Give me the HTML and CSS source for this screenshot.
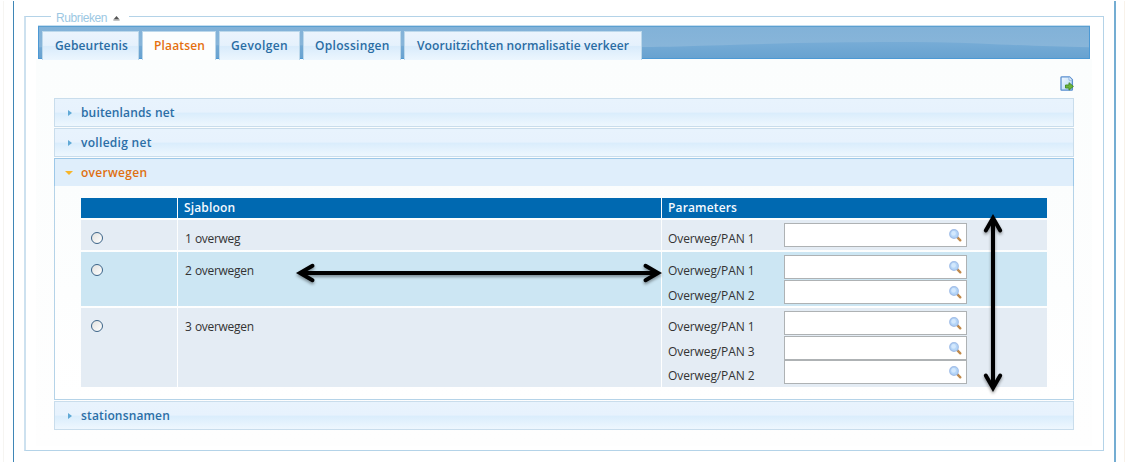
FILE: index.html
```html
<!DOCTYPE html>
<html lang="nl">
<head>
<meta charset="utf-8">
<title>Rubrieken</title>
<link rel="stylesheet" href="styles.css">
</head>
<body>
<svg class="defs" width="0" height="0">
  <defs>
    <linearGradient id="sheet" x1="0" y1="0" x2="1" y2="1"><stop offset="0" stop-color="#f4faff"/><stop offset="1" stop-color="#a9d2f5"/></linearGradient>
    <linearGradient id="wave" x1="0" y1="0" x2="0" y2="1"><stop offset="0" stop-color="#77acd6"/><stop offset="1" stop-color="#68a2d0"/></linearGradient>
    <symbol id="lens" viewBox="0 0 13 13">
      <path d="M8.2 8.2L11.3 11.3" stroke="#c08a4c" stroke-width="2.4" stroke-linecap="round"/>
      <path d="M7.9 8.6L8.6 7.9" stroke="#8b8f9c" stroke-width="2"/>
      <circle cx="5" cy="5" r="4.3" fill="#b5d6f8" stroke="#a3bfe8" stroke-width="1.2"/>
      <circle cx="4.6" cy="4.4" r="2.3" fill="#d3e8fd"/>
    </symbol>
  </defs>
</svg>
<div class="outer">
<div class="frame">
  <section class="group">
    <div class="legend"><span>Rubrieken</span><svg width="7" height="5" viewBox="0 0 7 5"><path d="M3.5 0L6.6 3.6H.4z" fill="#555"/><path d="M.3 4.2H6.7" stroke="#aaa"/></svg></div>
    <nav class="tabs">
      <svg class="wave" width="1050" height="30" viewBox="0 0 1050 31" preserveAspectRatio="none"><path d="M0 20C250 14 500 22 640 19C760 15 860 13 940 16C980 18 1010 19 1050 20V31H0z" fill="url(#wave)"/></svg>
      <a class="tab t1"><span>Gebeurtenis</span></a>
      <a class="tab t2 active"><span>Plaatsen</span></a>
      <a class="tab t3"><span>Gevolgen</span></a>
      <a class="tab t4"><span>Oplossingen</span></a>
      <a class="tab t5"><span>Vooruitzichten normalisatie verkeer</span></a>
    </nav>
    <div class="panel">
      <div class="toolbar">
        <svg width="14" height="15" viewBox="0 0 14 15"><path d="M2 .8H9.5L12.4 3.7V13.6Q12.4 14.2 11.8 14.2H1.6Q1 14.2 1 13.6V1.5Q1 .8 2 .8z" fill="url(#sheet)" stroke="#5a8fcf" stroke-width="1.3"/><path d="M9 1L9 4.2H12.3" fill="#fff" stroke="#86addb" stroke-width=".9"/><path d="M5.5 9H9V6.7L13.4 10.4L9 14.1V12H5.5z" fill="#6cb33b" stroke="#418a22" stroke-width=".9"/></svg>
      </div>
      <h3 class="bar"><i class="right"></i><span class="b1">buitenlands net</span></h3>
      <h3 class="bar"><i class="right"></i><span class="b2">volledig net</span></h3>
      <h3 class="bar open"><i class="down"></i><span class="b3">overwegen</span></h3>
      <div class="content">
        <div class="grid">
          <div class="row head"><div></div><div>Sjabloon</div><div>Parameters</div></div>
          <div class="row r1">
            <div class="pick"><b class="radio"></b></div><div class="name">1 overweg</div>
            <div class="params">
              <div class="param"><span>Overweg/PAN 1</span><div class="field"><svg width="13" height="13"><use href="#lens"/></svg></div></div>
            </div>
          </div>
          <div class="row r2">
            <div class="pick"><b class="radio"></b></div><div class="name">2 overwegen</div>
            <div class="params">
              <div class="param"><span>Overweg/PAN 1</span><div class="field"><svg width="13" height="13"><use href="#lens"/></svg></div></div>
              <div class="param"><span>Overweg/PAN 2</span><div class="field"><svg width="13" height="13"><use href="#lens"/></svg></div></div>
            </div>
          </div>
          <div class="row r3">
            <div class="pick"><b class="radio"></b></div><div class="name">3 overwegen</div>
            <div class="params">
              <div class="param"><span>Overweg/PAN 1</span><div class="field"><svg width="13" height="13"><use href="#lens"/></svg></div></div>
              <div class="param"><span>Overweg/PAN 3</span><div class="field"><svg width="13" height="13"><use href="#lens"/></svg></div></div>
              <div class="param"><span>Overweg/PAN 2</span><div class="field"><svg width="13" height="13"><use href="#lens"/></svg></div></div>
            </div>
          </div>
        </div>
      </div>
      <h3 class="bar last"><i class="right"></i><span class="b4">stationsnamen</span></h3>
    </div>
  </section>
</div>
</div>
<svg class="arrows" width="1127" height="463" viewBox="0 0 1127 463">
  <g fill="none" stroke="#000" stroke-width="4" stroke-linecap="round" stroke-linejoin="miter">
    <path d="M301 273H657" stroke-linecap="butt"/>
    <path d="M312.5 265.8L300 273L312.5 280.2"/>
    <path d="M645.500 265.800L658 273L645.500 280.200"/>
    <path d="M993 219V386" stroke-linecap="butt"/>
    <path d="M985.800 230.500L993 218L1000.200 230.500"/>
    <path d="M985.800 375.500L993 388L1000.200 375.500"/>
  </g>
</svg>
</body>
</html>
```
FILE: styles.css
```css
* { box-sizing: border-box; }
body { margin: 0; width: 1127px; height: 463px; overflow: hidden; background: #fff; font-family: "Open Sans", "Noto Sans", sans-serif; font-size: 12px; color: #333; }
.defs { position: absolute; }
.outer { margin: 1px 2px 0 3px; height: 461px; padding: 0 8px 0 9px; border-left: 1px solid #f6f5f2; border-right: 1px solid #f8f2ea; }
.frame { height: 461px; border-left: 1px solid #3f86b6; border-right: 2px solid #74add2; padding: 15px 10px 0; }
.group { height: 435px; border: 1px solid #b4d3e8; border-left: 2px solid #cde1ef; padding: 0 14px 0 12px; }
.legend { display: flex; align-items: center; gap: 6px; width: 78px; height: 14px; margin: -7px 0 0 13px; padding-left: 5px; padding-top: 2px; background: #fff; color: #9cc8e3; font: 12px/14px "Liberation Sans", Arial, sans-serif; letter-spacing: -.4px; }
.legend svg { margin-top: 1px; }
.tabs { position: relative; display: flex; gap: 3px; width: 1052px; height: 33px; margin-top: 2px; padding: 4px 0 0 3px; border: 1px solid #4c99d5; border-top-color: #5b9fd0; background: linear-gradient(#82b2d8, #8bb7da); box-shadow: 0 -1px #c5def0; }
.wave { position: absolute; left: 0; top: 1px; }
.tab { position: relative; height: 29px; border: 1px solid #bcd8eb; border-bottom: 0; background: linear-gradient(#ebf4fd 0, #e5f1fc 48%, #d8ebfb 51%, #ecf6fe 100%); color: #2a6ca3; font-weight: 600; line-height: 28px; white-space: nowrap; padding-left: 11px; letter-spacing: .15px; }
.tab.active { background: #fcfefe; color: #e4700f; }
.t1 { width: 97px; padding-left: 12px; }
.t2 { width: 74px; }
.t3 { width: 81px; letter-spacing: .4px; }
.t4 { width: 98px; letter-spacing: .3px; }
.t5 { width: 238px; padding-left: 12px; letter-spacing: .1px; }
.panel { height: 387px; margin-left: -2px; padding: 17px 18px 0 18px; width: 1056px; background: linear-gradient(#fbfdfd, #fefefe); }
.toolbar { height: 22px; display: flex; justify-content: flex-end; }
.bar { display: flex; align-items: center; width: 1020px; height: 29px; margin: 0 0 1px; padding: 0 0 1px 12px; border: 1px solid #c9ddec; background: linear-gradient(#e8f3fd 0, #e7f2fd 48%, #daedfc 53%, #eef7fe 100%); color: #2b6ea6; font-size: 12px; font-weight: 600; letter-spacing: .15px; }
.bar i { width: 14px; }
.b2, .b3 { letter-spacing: .3px; }
.right::before { content: ""; display: block; width: 0; border: 3px solid transparent; border-left: 4px solid #60a9d6; border-right: 0; margin-left: 1px; margin-top: 2px; }
.down::before { content: ""; display: block; width: 0; border: 4px solid transparent; border-top-color: #f7b52a; border-bottom: 0; margin-left: -2px; margin-top: 2px; }
.bar.open { height: 28px; margin: 0; border-color: #9dc8e8; border-bottom: 0; background: #dfeefb; color: #df7010; }
.content { width: 1020px; height: 214px; padding: 12px 0 0 26px; border: 1px solid #b5d3e8; border-top: 0; background: linear-gradient(#fbfdfd, #fff); }
.grid { width: 966px; }
.row { display: grid; grid-template-columns: 96px 483px 385px; column-gap: 1px; margin-bottom: 2px; }
.row > div { background: #e4ecf4; }
.head > div { height: 20px; background: #0069b1; color: #f4faff; font-weight: 600; line-height: 19px; padding-left: 6px; letter-spacing: .15px; }
.r1 { height: 30px; }
.r2 { height: 54px; }
.r3 { height: 79px; }
.r2 > div { background: #cce6f3; }
.pick { padding: 12px 0 0 10px; }
.radio { display: block; width: 12px; height: 12px; border: 1px solid #3c6488; border-radius: 50%; background: linear-gradient(135deg, #e2e2df, #fff); }
.row > .name { padding: 9px 0 0 7px; line-height: 20px; letter-spacing: -.3px; word-spacing: .5px; }
.row > .params { padding: 3px 0 0 6px; }
.param { display: flex; height: 24.700px; line-height: 31px; white-space: nowrap; letter-spacing: -.1px; }
.param span { width: 116px; }
.field { width: 183px; height: 24px; padding: 5px 0 0 164px; border: 1px solid #aeb2b4; background: #fff; line-height: 0; }
.bar.last { margin-top: 1px; }
.arrows { position: absolute; left: 0; top: 0; filter: drop-shadow(0 2px 1.500px rgba(0, 0, 0, .4)); }
```
